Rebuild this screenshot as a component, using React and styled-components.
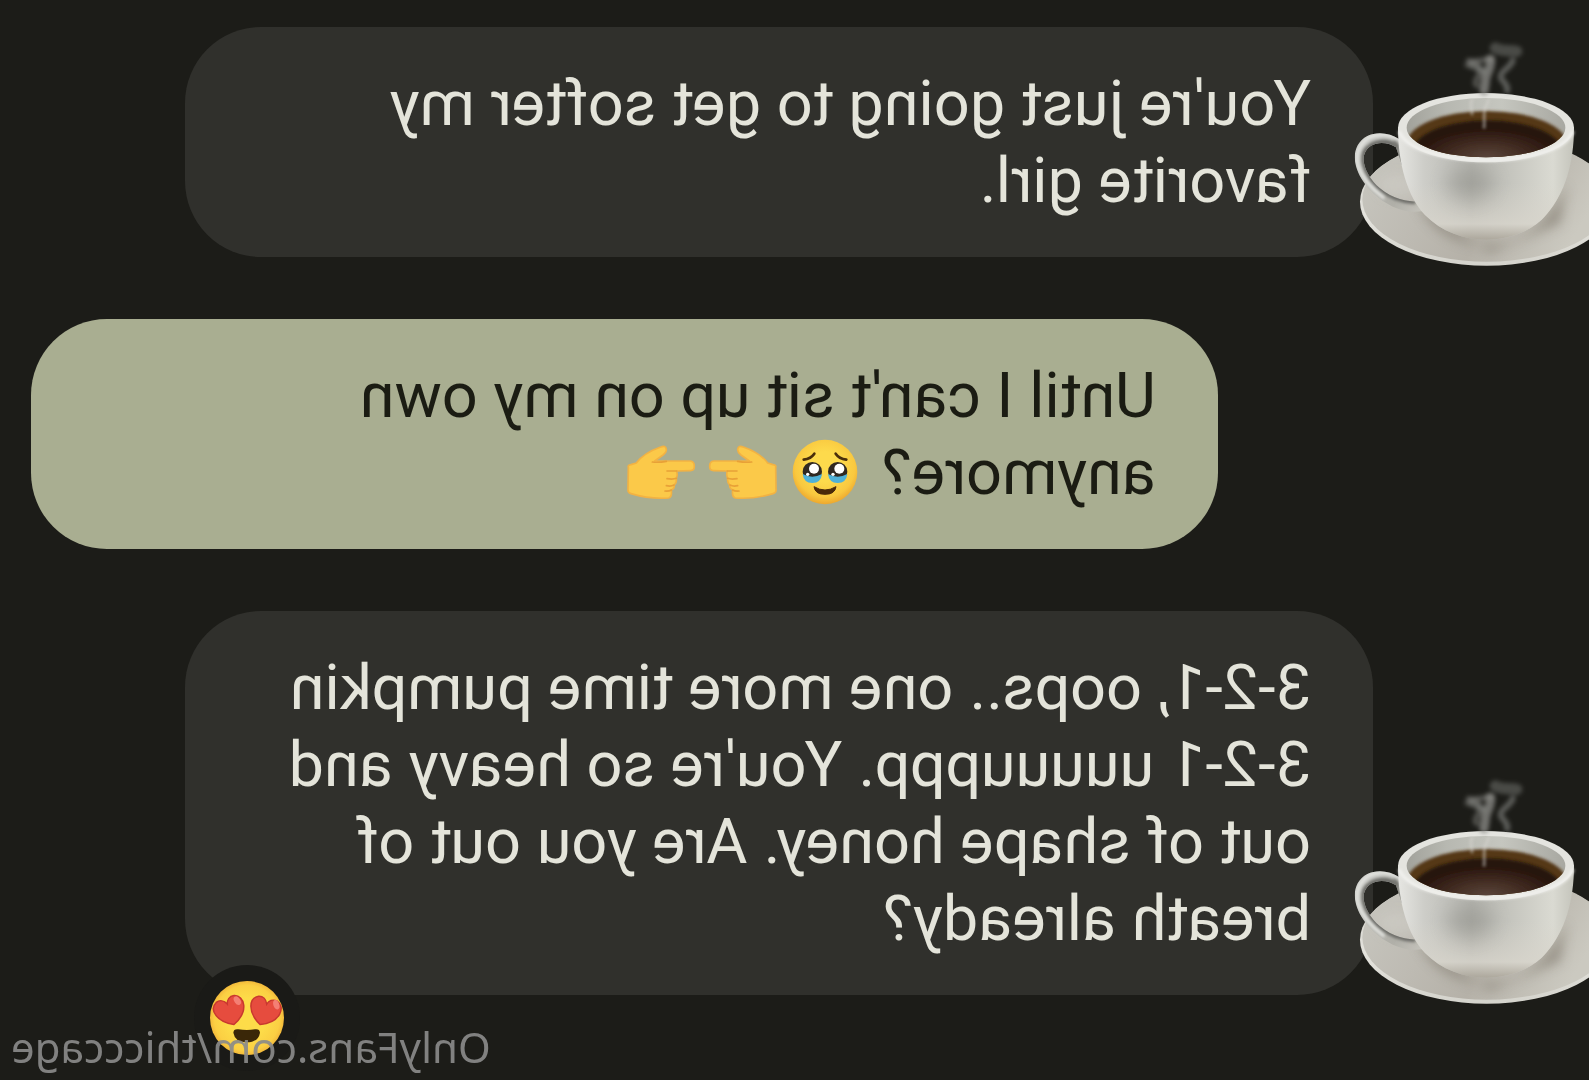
import React from "react";
import styled, { createGlobalStyle } from "styled-components";

const GlobalStyle = createGlobalStyle`
  * { box-sizing: border-box; }
  body { margin: 0; background: #1c1c18; }
`;

const Screen = styled.main`
  position: relative;
  min-height: 100vh;
  padding: 27px 0 85px;
  overflow: hidden;
  transform: scaleX(-1);
  background: #1c1c18;
  font-family: Roboto, "Liberation Sans", sans-serif;
`;

const Thread = styled.ol`
  display: flex;
  flex-direction: column;
  gap: 62px;
  margin: 0;
  padding: 0;
  list-style: none;
`;

const Row = styled.li`
  display: flex;
  align-items: flex-end;
  padding-left: ${(p) => (p.$sent ? "371px" : "0")};
  padding-right: ${(p) => (p.$sent ? "31px" : "185px")};
`;

const Bubble = styled.div`
  position: relative;
  flex: 1;
  min-width: 0;
  padding: 38px 62px;
  border-radius: 76px;
  background: ${(p) => (p.$sent ? "#a9ae91" : "#30302c")};
  color: ${(p) => (p.$sent ? "#1b1c13" : "#e4e4da")};
`;

const Message = styled.p`
  margin: 0;
  font-size: 63px;
  line-height: 77px;
  white-space: pre-line;
`;

const Avatar = styled.svg`
  position: relative;
  z-index: 1;
  flex: none;
  width: 259px;
  height: 250px;
  margin: 0 -43px -23px 0;
`;

const Emoji = styled.svg`
  width: 68px;
  height: 68px;
  margin: 0 7px;
  vertical-align: -12px;
  overflow: visible;
`;

const Reaction = styled.span`
  position: absolute;
  right: 9px;
  bottom: -76px;
  display: grid;
  place-items: center;
  width: 106px;
  height: 106px;
  border-radius: 50%;
  background: #1a1a17;
`;

const ReactionIcon = styled.svg`
  width: 76px;
  height: 76px;
`;

const Watermark = styled.p`
  position: absolute;
  right: 11px;
  bottom: 6px;
  margin: 0;
  font-family: "Noto Sans", "Open Sans", sans-serif;
  font-size: 42px;
  line-height: 54px;
  color: rgba(138, 138, 138, 0.92);
`;

function CoffeeCup({ id }) {
  const ref = (name) => `url(#${id}-${name})`;
  const bowl =
    "M204 292C204 400 232 500 285 555C335 605 400 629 470 629C540 629 610 602 650 553C705 490 732 400 732 292Z";
  return (
    <Avatar viewBox="0 0 777 750" role="img" aria-label="Cup of coffee">
      <defs>
        <linearGradient id={`${id}-saucer`} x1="0" y1="0" x2="1" y2="0.3">
          <stop offset="0" stopColor="#c9c8c1" />
          <stop offset="0.4" stopColor="#bdbab2" />
          <stop offset="0.65" stopColor="#b5b1a8" />
          <stop offset="1" stopColor="#cbc9c0" />
        </linearGradient>
        <linearGradient id={`${id}-edge`} x1="0" y1="0" x2="0" y2="1">
          <stop offset="0" stopColor="#c8c7c0" />
          <stop offset="0.6" stopColor="#e4e3dd" />
          <stop offset="1" stopColor="#d4d3cc" />
        </linearGradient>
        <linearGradient id={`${id}-body`} x1="0" y1="0" x2="1" y2="0">
          <stop offset="0" stopColor="#e6e6e2" />
          <stop offset="0.15" stopColor="#cdcdc8" />
          <stop offset="0.42" stopColor="#b4b4ae" />
          <stop offset="0.65" stopColor="#c6c6bf" />
          <stop offset="0.88" stopColor="#dadad2" />
          <stop offset="1" stopColor="#c4c4bb" />
        </linearGradient>
        <linearGradient id={`${id}-shade`} x1="0" y1="0" x2="0" y2="1">
          <stop offset="0.5" stopColor="#d8d5cc" stopOpacity="0" />
          <stop offset="0.86" stopColor="#d8d5cc" stopOpacity="0.8" />
          <stop offset="1" stopColor="#aaa498" stopOpacity="0.85" />
        </linearGradient>
        <linearGradient id={`${id}-inner`} x1="0" y1="0" x2="1" y2="0">
          <stop offset="0" stopColor="#a2a29b" />
          <stop offset="0.25" stopColor="#b7b8b1" />
          <stop offset="0.6" stopColor="#c5c6bf" />
          <stop offset="1" stopColor="#a8a8a1" />
        </linearGradient>
        <radialGradient id={`${id}-coffee`} cx="0.5" cy="0.62" r="0.5">
          <stop offset="0" stopColor="#5b463c" />
          <stop offset="0.45" stopColor="#452f25" />
          <stop offset="1" stopColor="#26130b" />
        </radialGradient>
        <linearGradient id={`${id}-handle`} x1="0" y1="0" x2="1" y2="1">
          <stop offset="0" stopColor="#d9dad6" />
          <stop offset="0.35" stopColor="#b9bab5" />
          <stop offset="0.7" stopColor="#b0afa8" />
          <stop offset="1" stopColor="#cbc9c1" />
        </linearGradient>
        <clipPath id={`${id}-mouth`}>
          <ellipse cx="468" cy="293" rx="238" ry="89" />
        </clipPath>
        <clipPath id={`${id}-grip`}>
          <path d="M208 328C180 308 140 304 112 318C78 336 68 372 78 408C92 460 140 510 200 535C230 547 255 547 280 543L268 515C230 515 190 508 150 475C115 445 92 400 104 370C118 335 165 330 198 352L218 412Z" />
        </clipPath>
        <clipPath id={`${id}-plate`}>
          <ellipse cx="470" cy="512" rx="380" ry="190" />
        </clipPath>
        <filter id={`${id}-soft`} x="-50%" y="-50%" width="200%" height="200%">
          <feGaussianBlur stdDeviation="4" />
        </filter>
        <filter id={`${id}-mist`} x="-50%" y="-50%" width="200%" height="200%">
          <feGaussianBlur stdDeviation="7" />
        </filter>
        <filter id={`${id}-wide`} x="-60%" y="-60%" width="220%" height="220%">
          <feGaussianBlur stdDeviation="18" />
        </filter>
        <filter id={`${id}-glow`} x="-80%" y="-80%" width="260%" height="260%">
          <feGaussianBlur stdDeviation="30" />
        </filter>
      </defs>
      <g transform="translate(777 0) scale(-1 1)">
        <ellipse cx="470" cy="515" rx="380" ry="192" fill={ref("edge")} />
        <ellipse cx="471" cy="508" rx="374" ry="187" fill={ref("saucer")} />
        <g clipPath={ref("plate")}>
          <path d="M260 520C310 610 390 648 480 646C570 644 650 590 710 460L690 580L480 668Z" fill="#857f73" opacity="0.7" filter={ref("wide")} />
          <ellipse cx="205" cy="465" rx="60" ry="36" fill="#d0cfc8" opacity="0.5" filter={ref("wide")} />
        </g>
        <g clipPath={ref("grip")}>
          <rect x="60" y="290" width="240" height="270" fill={ref("handle")} />
          <path d="M204 352C170 327 125 333 104 366C92 400 116 446 150 475C180 502 220 514 256 516" fill="none" stroke="#6b6b66" strokeWidth="14" filter={ref("soft")} />
          <path d="M205 328C182 313 145 308 116 323C86 343 76 375 84 408C96 445 124 475 160 503" fill="none" stroke="#e6e7e3" strokeWidth="9" strokeLinecap="round" filter={ref("soft")} />
          <path d="M192 335C203 355 206 385 216 412" fill="none" stroke="#777771" strokeWidth="10" filter={ref("soft")} />
        </g>
        <path d={bowl} fill={ref("body")} />
        <path d={bowl} fill={ref("shade")} />
        <ellipse cx="420" cy="460" rx="70" ry="50" fill="#84847e" opacity="0.4" filter={ref("glow")} />
        <ellipse cx="468" cy="293" rx="264" ry="104" fill="#e4e4df" />
        <path d="M208 304C224 356 335 390 468 390C602 390 712 356 729 304" fill="none" stroke="#f3f3f0" strokeWidth="9" filter={ref("soft")} />
        <ellipse cx="468" cy="293" rx="238" ry="89" fill={ref("inner")} />
        <g clipPath={ref("mouth")}>
          <ellipse cx="470" cy="342" rx="240" ry="99" fill="#553719" filter={ref("soft")} />
          <ellipse cx="472" cy="362" rx="222" ry="91" fill={ref("coffee")} filter={ref("soft")} />
          <path d="M428 205C415 225 430 242 425 256M462 296C465 270 459 250 466 232C474 221 477 215 474 205" fill="none" stroke="#d8d6d0" strokeWidth="9" opacity="0.5" filter={ref("soft")} />
        </g>
        <g fill="none" stroke="#8d8e8a" strokeLinecap="round" filter={ref("mist")}>
          <path d="M412 105C430 90 455 100 448 130C440 152 430 155 440 166" strokeWidth="17" opacity="0.45" />
          <path d="M480 88C488 108 468 128 466 148C466 165 463 170 462 182" strokeWidth="28" opacity="0.75" />
          <path d="M416 92C440 98 458 86 488 88" strokeWidth="16" opacity="0.5" />
          <path d="M425 108C440 112 448 118 460 124" strokeWidth="18" opacity="0.55" />
          <path d="M548 92C541 115 510 122 512 142C518 158 535 162 532 182" strokeWidth="18" opacity="0.55" />
          <path d="M496 54C515 66 535 60 560 64" strokeWidth="34" opacity="0.4" />
        </g>
      </g>
    </Avatar>
  );
}

function TearyFace() {
  return (
    <Emoji viewBox="0 0 204 204" role="img" aria-label="Face holding back tears">
      <defs>
        <radialGradient id="teary-skin" cx="0.5" cy="0.42" r="0.58">
          <stop offset="0.4" stopColor="#fdda4c" />
          <stop offset="0.8" stopColor="#f9c83f" />
          <stop offset="1" stopColor="#eda72e" />
        </radialGradient>
      </defs>
      <circle cx="102" cy="102" r="97" fill="url(#teary-skin)" />
      <path d="M38 65Q60 62 70 47M166 65Q144 62 134 47" fill="none" stroke="#4a2e0b" strokeWidth="8" strokeLinecap="round" />
      {[64, 140].map((x) => (
        <g key={x}>
          <circle cx={x} cy="101" r="29" fill="#302821" />
          <path d={`M${x - 29} 108Q${x} 124 ${x + 29} 108Q${x + 26} 135 ${x} 135Q${x - 26} 135 ${x - 29} 108Z`} fill="#4fb1d8" />
          <circle cx={x - 5} cy="92" r="15" fill="#fff" />
          <circle cx={x + 14} cy="109" r="5" fill="#fff" />
        </g>
      ))}
      <path d="M69 146Q102 166 135 146Q132 169 102 169Q72 169 69 146Z" fill="#4a2a0a" stroke="#4a2a0a" strokeWidth="3" strokeLinejoin="round" />
    </Emoji>
  );
}

function PointingHand({ left }) {
  return (
    <Emoji viewBox="0 0 204 204" role="img" aria-label={left ? "Hand pointing left" : "Hand pointing right"}>
      <g transform={left ? "translate(204 0) scale(-1 1)" : undefined}>
        <path
          d="M4 87Q1 82 12 80L28 75Q50 45 101 27Q116 21 118 34Q119 42 108 51L83 69L190 69Q202 70 202 85Q202 98 190 98L149 99Q153 110 148 121Q150 132 142 141Q143 151 133 156Q136 176 125 180Q68 184 12 167Q2 164 3 155Z"
          fill="#fbc949"
          stroke="#f2b243"
          strokeWidth="5"
          strokeLinejoin="round"
        />
        <path d="M76 72Q96 74 118 70M120 99L149 99M120 122Q138 125 148 121M118 143Q132 146 141 141M114 159Q126 160 133 156" fill="none" stroke="#e8a137" strokeWidth="5" strokeLinecap="round" />
      </g>
    </Emoji>
  );
}

function HeartEyes() {
  const heart = "M0 32C-38 16 -38 -18 -18 -23C-8 -25 -2 -18 0 -11C4 -20 12 -24 20 -21C38 -12 32 16 0 32Z";
  return (
    <ReactionIcon viewBox="0 0 228 228" role="img" aria-label="Smiling face with heart eyes">
      <defs>
        <radialGradient id="heart-skin" cx="0.5" cy="0.5" r="0.52">
          <stop offset="0.5" stopColor="#fddc49" />
          <stop offset="0.85" stopColor="#fbcf43" />
          <stop offset="1" stopColor="#f0b238" />
        </radialGradient>
      </defs>
      <circle cx="114" cy="114" r="111" fill="url(#heart-skin)" />
      <g stroke="#c8382f" strokeWidth="3">
        <path transform="translate(60 88) rotate(-18) scale(1.5)" d={heart} fill="#e64c3e" />
        <path transform="translate(168 88) rotate(18) scale(1.5)" d={heart} fill="#e64c3e" />
      </g>
      <ellipse cx="26" cy="74" rx="9" ry="15" transform="rotate(20 26 74)" fill="#f47f74" />
      <ellipse cx="143" cy="62" rx="9" ry="14" transform="rotate(35 143 62)" fill="#f47f74" />
      <path d="M75 158Q76 146 90 148Q114 152 140 148Q154 146 155 158Q150 187 115 187Q80 187 75 158Z" fill="#3a2708" />
    </ReactionIcon>
  );
}

export default function App() {
  return (
    <>
      <GlobalStyle />
      <Screen>
        <Thread>
          <Row>
            <CoffeeCup id="cup-first" />
            <Bubble>
              <Message>You're just going to get softer my favorite girl.</Message>
            </Bubble>
          </Row>
          <Row $sent>
            <Bubble $sent>
              <Message>
                Until I can't sit up on my own anymore? <TearyFace />
                <PointingHand />
                <PointingHand left />
              </Message>
            </Bubble>
          </Row>
          <Row>
            <CoffeeCup id="cup-second" />
            <Bubble>
              <Message>
                {"3-2-1, oops.. one more time pumpkin\n3-2-1 uuuuuppp. You're so heavy and out of shape honey. Are you out of breath already?"}
              </Message>
              <Reaction>
                <HeartEyes />
              </Reaction>
            </Bubble>
          </Row>
        </Thread>
        <Watermark>OnlyFans.com/thicccage</Watermark>
      </Screen>
    </>
  );
}
